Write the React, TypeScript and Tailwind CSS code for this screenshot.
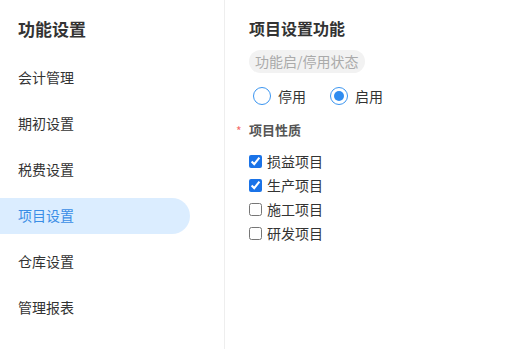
import React, { useState } from "react";

const menuItems = ["会计管理", "期初设置", "税费设置", "项目设置", "仓库设置", "管理报表"];
const projectTypes = [
  { name: "损益项目", checked: true },
  { name: "生产项目", checked: true },
  { name: "施工项目", checked: false },
  { name: "研发项目", checked: false },
];

const Radio: React.FC<{ label: string; checked: boolean; onClick: () => void }> = ({
  label,
  checked,
  onClick,
}) => (
  <button type="button" onClick={onClick} className="flex items-center gap-[7px]">
    <span className="flex h-[18px] w-[18px] items-center justify-center rounded-full border-[1.5px] border-[#3b95f0] bg-white">
      {checked && <span className="h-[10px] w-[10px] rounded-full bg-[#2f8cf0]" />}
    </span>
    <span className="text-[14px] text-[#333]">{label}</span>
  </button>
);

export default function App() {
  const [active, setActive] = useState("项目设置");
  const [enabled, setEnabled] = useState(true);
  const [types, setTypes] = useState(projectTypes);

  const toggle = (i: number) =>
    setTypes((prev) => prev.map((t, idx) => (idx === i ? { ...t, checked: !t.checked } : t)));

  return (
    <div
      className="flex h-[349px] w-full bg-white text-[#333]"
      style={{ fontFamily: '"Noto Sans CJK SC", "Noto Sans", sans-serif' }}
    >
      <aside className="w-[225px] shrink-0 border-r border-[#eeeeee]">
        <h1 className="flex h-[60px] items-center pb-[4px] pl-[18px] text-[17px] font-bold leading-none text-[#333]">
          功能设置
        </h1>
        <nav className="flex flex-col gap-[10px]">
          {menuItems.map((item) => (
            <button
              key={item}
              type="button"
              onClick={() => setActive(item)}
              className={
                "flex h-[36px] w-[190px] items-center rounded-r-full pb-[1px] pl-[18px] text-left text-[14px] " +
                (active === item ? "bg-[#dbedff] text-[#3a8ee6]" : "text-[#333]")
              }
            >
              {item}
            </button>
          ))}
        </nav>
      </aside>

      <main className="flex-1 pl-[24px] pt-[16px]">
        <h2 className="h-[24px] text-[16px] font-bold leading-[24px] text-[#333]">项目设置功能</h2>
        <div className="mt-[10px] inline-flex h-[23px] items-center rounded-full bg-[#f2f2f2] px-[6px] text-[14px] text-[#aaaaaa]">
          功能启/停用状态
        </div>
        <div className="mt-[12px] flex h-[22px] items-center gap-[24px] pl-[4px]">
          <Radio label="停用" checked={!enabled} onClick={() => setEnabled(false)} />
          <Radio label="启用" checked={enabled} onClick={() => setEnabled(true)} />
        </div>
        <div className="relative mt-[12px] flex h-[22px] items-center text-[13px] font-bold text-[#555]">
          <span className="absolute left-[-13px] top-[3px] text-[12px] font-normal text-[#f56c6c]">*</span>
          项目性质
        </div>
        <div className="mt-[8px] flex flex-col">
          {types.map((t, i) => (
            <label key={t.name} className="flex h-[24px] items-center gap-[5px] text-[14px] text-[#333]">
              <input
                type="checkbox"
                checked={t.checked}
                onChange={() => toggle(i)}
                className="m-0 h-[13px] w-[13px] accent-[#1a73e8]"
              />
              {t.name}
            </label>
          ))}
        </div>
      </main>
    </div>
  );
}
